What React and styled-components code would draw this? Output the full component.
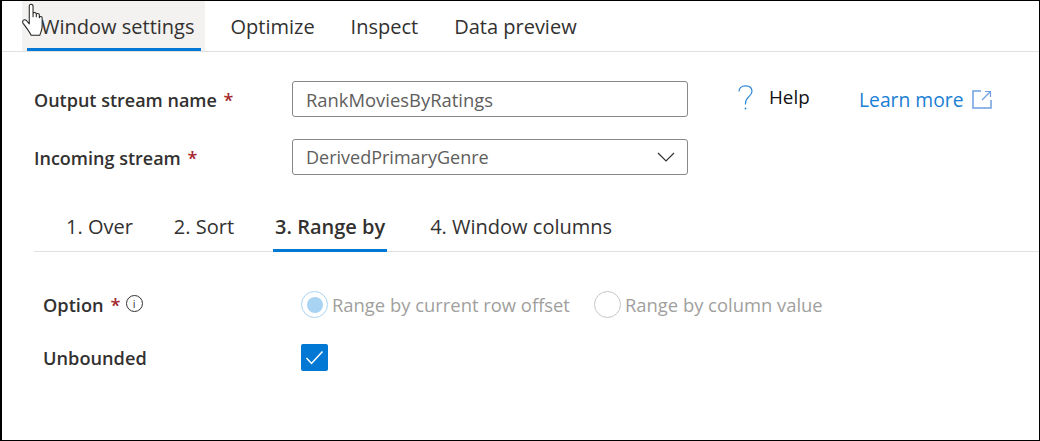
import React from "react";
import styled, { createGlobalStyle } from "styled-components";

const GlobalStyle = createGlobalStyle`
  html, body {
    margin: 0;
    padding: 0;
    background: #fff;
  }
  * {
    box-sizing: border-box;
  }
`;

const FONT = `"Open Sans", "Noto Sans", sans-serif`;

export default function App() {
  return (
    <>
      <GlobalStyle />
      <Frame>
        <TopTabs>
          <TopTab $active>Window settings</TopTab>
          <TopTab>Optimize</TopTab>
          <TopTab>Inspect</TopTab>
          <TopTab>Data preview</TopTab>
        </TopTabs>
        <Cursor viewBox="0 0 26 38" fill="#fff" stroke="#222" strokeWidth="1.1" strokeLinejoin="round">
          <path d="M8 3.5c0-3 4-3 4 0v11l0-3c0-2 3.4-2 3.4 0v3l0-2c0-2 3.2-2 3.2 0v3c0-1.800 3-1.800 3 0v9c0 4-1.500 6.500-2.500 9.500H10c-2-4-5-8-8.500-12.500-1.800-2.500 1-5 3.500-3L8 22z" />
        </Cursor>

        <Form>
          <FormRow>
            <FieldLabel>
              Output stream name <Star>*</Star>
            </FieldLabel>
            <TextBox $size={18.4}>RankMoviesByRatings</TextBox>
            <HelpMark width="15" height="25" viewBox="0 0 15 25" fill="none" stroke="#2b88d8" strokeWidth="1.200">
              <path d="M1 6.500C1 3 3.600 .8 7.500 .8S14 3 14 6.500c0 4.500-6.500 5.500-6.500 11.500v1.500" />
              <circle cx="7.500" cy="23.500" r=".9" fill="#2b88d8" stroke="none" />
            </HelpMark>
            <HelpText>Help</HelpText>
            <LearnMore>
              Learn more
              <svg width="20" height="19" viewBox="0 0 20 19" fill="none" stroke="#6d9fe0" strokeWidth="1.500">
                <path d="M9 1H1v17h18v-8" />
                <path d="M10 10l8-8M13 1.500h5.500V7" strokeWidth="1.200" />
              </svg>
            </LearnMore>
          </FormRow>
          <FormRow>
            <FieldLabel>
              Incoming stream <Star>*</Star>
            </FieldLabel>
            <TextBox $size={18}>
              DerivedPrimaryGenre
              <svg width="18" height="10" viewBox="0 0 18 10" fill="none" stroke="#333" strokeWidth="1.200">
                <path d="M1 1l8 8 8-8" />
              </svg>
            </TextBox>
          </FormRow>
        </Form>

        <SubTabs>
          <SubTab $gap={37}>1. Over</SubTab>
          <SubTab $gap={37}>2. Sort</SubTab>
          <SubTab $active $gap={41}>3. Range by</SubTab>
          <SubTab>4. Window columns</SubTab>
        </SubTabs>

        <Options>
          <OptionRow>
            <OptionLabel>
              Option <Star>*</Star>
              <InfoIcon>i</InfoIcon>
            </OptionLabel>
            <RadioGroup>
              <Radio $checked />
              <RadioText>Range by current row offset</RadioText>
              <Radio />
              <RadioText>Range by column value</RadioText>
            </RadioGroup>
          </OptionRow>
          <OptionRow>
            <OptionLabel>Unbounded</OptionLabel>
            <Checkbox>
              <svg width="19" height="15" viewBox="0 0 19 15" fill="none" stroke="#fff" strokeWidth="1.500">
                <path d="M1.500 8l5 5.500L17.500 1.500" />
              </svg>
            </Checkbox>
          </OptionRow>
        </Options>
      </Frame>
    </>
  );
}

const Frame = styled.div`
  position: relative;
  width: 1040px;
  height: 441px;
  overflow: hidden;
  background: #fff;
  border-top: 1px solid #000;
  border-left: 2px solid #000;
  border-bottom: 1px solid #000;
  border-right: 1px solid #000;
  font-family: ${FONT};
  color: #323130;
`;

const TopTabs = styled.div`
  display: flex;
  height: 51px;
  padding-left: 20px;
  border-bottom: 1px solid #e1e1e1;
`;

const TopTab = styled.div`
  position: relative;
  height: 50px;
  display: flex;
  align-items: center;
  padding: 0 ${(p) => (p.$active ? "11px" : "18px")} 0 ${(p) => (p.$active ? "19px" : "18px")};
  margin-right: ${(p) => (p.$active ? "7px" : 0)};
  font-size: 20px;
  color: #323130;
  background: ${(p) => (p.$active ? "#f3f2f1" : "transparent")};

  &::after {
    content: "";
    display: ${(p) => (p.$active ? "block" : "none")};
    position: absolute;
    left: 5px;
    right: 4px;
    bottom: 0;
    height: 3px;
    background: #0078d4;
  }
`;

const Cursor = styled.svg`
  position: absolute;
  left: 19px;
  top: 2px;
  width: 26px;
  height: 36px;
`;

const Form = styled.div`
  display: flex;
  flex-direction: column;
  gap: 22px;
  padding: 29px 0 0 32px;
`;

const FormRow = styled.div`
  display: flex;
  align-items: center;
  height: 36px;
`;

const FieldLabel = styled.div`
  width: 258px;
  padding-top: 1px;
  font-size: 18px;
  font-weight: 600;
  color: #323130;
`;

const Star = styled.span`
  margin-left: 2px;
  color: #a4262c;
  font-weight: 600;
`;

const TextBox = styled.div`
  width: 396px;
  height: 36px;
  display: flex;
  align-items: center;
  justify-content: space-between;
  padding: 0 12px 0 13px;
  border: 1px solid #8a8886;
  border-radius: 3px;
  font-size: ${(p) => p.$size}px;
  color: #605e5c;
`;

const HelpMark = styled.svg`
  margin: -4px 0 0 50px;
  flex: none;
`;

const HelpText = styled.span`
  margin: -5px 0 0 16px;
  width: 90px;
  font-size: 18.800px;
  color: #111;
`;

const LearnMore = styled.a`
  display: flex;
  align-items: center;
  gap: 9px;
  font-size: 19.300px;
  color: #1a80d4;
`;

const SubTabs = styled.div`
  display: flex;
  height: 52px;
  margin: 25px 0 0 32px;
  padding-left: 30px;
  border-bottom: 1px solid #e1e1e1;
`;

const SubTab = styled.div`
  position: relative;
  height: 51px;
  display: flex;
  align-items: center;
  margin-right: ${(p) => p.$gap || 0}px;
  padding: 1px 2px 0;
  font-size: 20px;
  font-weight: ${(p) => (p.$active ? 600 : 400)};
  color: #323130;

  &::after {
    content: "";
    display: ${(p) => (p.$active ? "block" : "none")};
    position: absolute;
    left: 0;
    right: 0;
    bottom: -1px;
    height: 3px;
    background: #0078d4;
  }
`;

const Options = styled.div`
  display: flex;
  flex-direction: column;
  gap: 26px;
  padding: 39px 0 0 41px;
`;

const OptionRow = styled.div`
  display: flex;
  align-items: center;
  height: 27px;
`;

const OptionLabel = styled.div`
  width: 258px;
  display: flex;
  align-items: center;
  gap: 5px;
  font-size: 18.200px;
  font-weight: 600;
  color: #323130;
`;

const InfoIcon = styled.span`
  width: 17px;
  height: 17px;
  margin: -2px 0 0 0;
  display: flex;
  align-items: center;
  justify-content: center;
  border: 1px solid #323130;
  border-radius: 50%;
  font-size: 11px;
  font-weight: 400;
`;

const RadioGroup = styled.div`
  display: flex;
  align-items: center;
`;

const Radio = styled.span`
  width: 27px;
  height: 27px;
  display: flex;
  align-items: center;
  justify-content: center;
  border-radius: 50%;
  border: 1px solid ${(p) => (p.$checked ? "#a9d3f2" : "#c8c6c4")};

  &::after {
    content: "";
    display: ${(p) => (p.$checked ? "block" : "none")};
    width: 16px;
    height: 16px;
    border-radius: 50%;
    background: #a9d3f2;
  }
`;

const RadioText = styled.span`
  margin: 0 24px 0 4px;
  font-size: 18.400px;
  color: #a19f9d;
`;

const Checkbox = styled.span`
  width: 27px;
  height: 27px;
  display: flex;
  align-items: center;
  justify-content: center;
  border-radius: 2px;
  background: #0078d4;
`;
